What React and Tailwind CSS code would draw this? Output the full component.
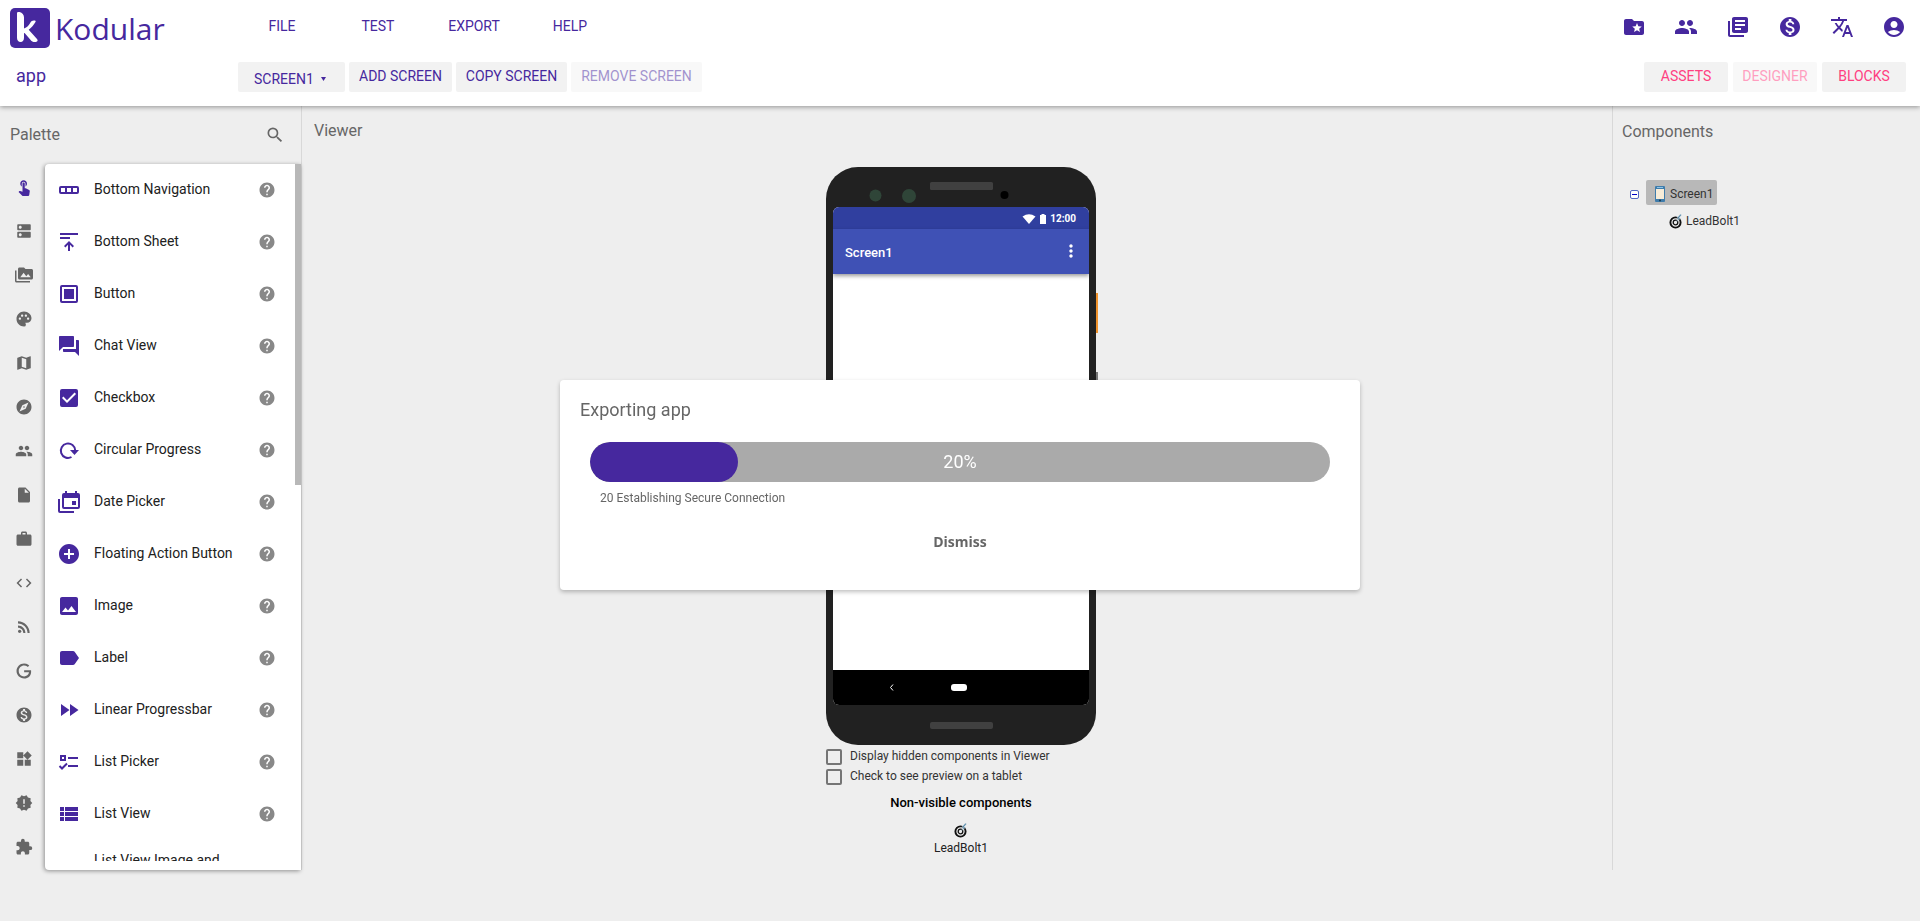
import React from 'react';
import {
  MdAccountCircle,
  MdAddCircle,
  MdCheckBox,
  MdCode,
  MdDns,
  MdExplore,
  MdExtension,
  MdFastForward,
  MdFolderSpecial,
  MdForum,
  MdHelp,
  MdImage,
  MdInsertDriveFile,
  MdLabel,
  MdLibraryBooks,
  MdMap,
  MdMonetizationOn,
  MdMoreVert,
  MdNewReleases,
  MdPalette,
  MdPeople,
  MdPermMedia,
  MdRssFeed,
  MdSearch,
  MdTouchApp,
  MdTranslate,
  MdViewList,
  MdWidgets,
  MdWork,
} from 'react-icons/md';

const Svg = ({ size = 24, children }) => (
  <svg width={size} height={size} viewBox="0 0 24 24" fill="currentColor" aria-hidden="true">
    {children}
  </svg>
);

const BottomNavIcon = () => (
  <Svg>
    <path fillRule="evenodd" d="M4 8h16a2 2 0 0 1 2 2v4a2 2 0 0 1-2 2H4a2 2 0 0 1-2-2v-4a2 2 0 0 1 2-2zm0 2v4h4v-4zm6 0v4h4v-4zm6 0v4h4v-4z" />
  </Svg>
);

const BottomSheetIcon = () => (
  <Svg>
    <path d="M3 3h18v2H3zM3 7h10v2H3zM12 11l5 5-1.4 1.4-2.6-2.6V21h-2v-6.200l-2.600 2.600L7 16z" />
  </Svg>
);

const ButtonIcon = () => (
  <Svg>
    <path fillRule="evenodd" d="M5 3h14a2 2 0 0 1 2 2v14a2 2 0 0 1-2 2H5a2 2 0 0 1-2-2V5a2 2 0 0 1 2-2zm0 2v14h14V5z" />
    <path d="M7 7h10v10H7z" />
  </Svg>
);

const CircularIcon = () => (
  <Svg>
    <path d="M14.500 19A7.200 7.200 0 1 1 18.200 12.500" fill="none" stroke="currentColor" strokeWidth="2" />
    <path d="M13 12h9l-4.500 5z" />
  </Svg>
);

const DatePickerIcon = () => (
  <Svg>
    <path
      fillRule="evenodd"
      d="M8 1h2v2h8V1h2v2h1a2 2 0 0 1 2 2v12a2 2 0 0 1-2 2H7a2 2 0 0 1-2-2V5a2 2 0 0 1 2-2h1zM7 8v9h14V8zM15 11h4v4h-4z"
    />
    <path d="M1 9h2v12h14v2H3a2 2 0 0 1-2-2z" />
  </Svg>
);

const ListPickerIcon = () => (
  <Svg>
    <path fillRule="evenodd" d="M3 5h6v6H3zm2 2v2h2V7z" />
    <path d="M11 7h10v2H11zM11 15h10v2H11z" />
    <path d="M2.500 16l2.500 2.500 5-5" fill="none" stroke="currentColor" strokeWidth="2" />
  </Svg>
);

const GoogleIcon = ({ size }) => (
  <Svg size={size}>
    <path d="M21.350 11.100H12.180V13.830H18.690C18.360 17.640 15.190 19.270 12.190 19.270C8.360 19.270 5 16.250 5 12C5 7.900 8.200 4.730 12.200 4.730C15.290 4.730 17.100 6.700 17.100 6.700L19 4.720C19 4.720 16.560 2 12.100 2C6.420 2 2.030 6.800 2.030 12C2.030 17.050 6.160 22 12.250 22C17.600 22 21.500 18.330 21.500 12.910C21.500 11.760 21.350 11.100 21.350 11.100Z" />
  </Svg>
);

const LeadBoltIcon = () => (
  <svg width="14" height="16" viewBox="0 0 14 16" fill="none" aria-hidden="true">
    <circle cx="6.500" cy="9.500" r="5.100" stroke="#111" strokeWidth="1.900" />
    <circle cx="6.500" cy="9.500" r="2.300" stroke="#111" strokeWidth="1.300" />
    <path d="M11.500 1L7.500 5.500h2L6.500 9.500l5.500-4.500h-2l2.500-3z" fill="#4f86a8" stroke="#eee" strokeWidth="0.400" />
  </svg>
);

const ScreenIcon = () => (
  <svg width="10" height="16" viewBox="0 0 10 16" aria-hidden="true">
    <rect width="10" height="16" rx="1" fill="#3f7cab" />
    <rect x="2" y="1" width="6" height="1" fill="#8cc4ea" />
    <rect x="1" y="3" width="8" height="10" fill="#f7ecd8" />
    <circle cx="5" cy="14.500" r="0.900" fill="#14324a" />
  </svg>
);

const LogoMark = () => (
  <svg width="40" height="40" viewBox="0 0 40 40" aria-hidden="true">
    <rect width="40" height="40" rx="5" fill="#46289e" />
    <path
      d="M7 5.200c0-1.200 1.200-1.600 2.600-1.100 2.700.9 4.400 2.500 4.400 5.200v11.200c3-1.200 5-3.200 6.300-5.800 1-2 2.700-2.600 4.600-2.200.9.200 1 1 .4 1.800-1.700 2.900-3.700 5.400-6.600 7.400l8.300 9.300c1.200 1.400.6 2.700-1.100 2.900-2.400.3-4.200-.5-5.700-2.500L14.600 25l-.6.300v4.500c0 2.600-1.200 4.200-3.400 4.200C8.300 34 7 32.400 7 29.800z"
      fill="#fff"
    />
  </svg>
);

const MENUS = ['FILE', 'TEST', 'EXPORT', 'HELP'];

const TOP_LINKS = [
  { label: 'Projects', icon: MdFolderSpecial },
  { label: 'Community', icon: MdPeople },
  { label: 'Docs', icon: MdLibraryBooks },
  { label: 'Monetization', icon: MdMonetizationOn },
  { label: 'Language', icon: MdTranslate },
  { label: 'Account', icon: MdAccountCircle },
];

const CATEGORIES = [
  { label: 'User Interface', icon: MdTouchApp, active: true },
  { label: 'Layout', icon: MdDns },
  { label: 'Media', icon: MdPermMedia },
  { label: 'Drawing and Animation', icon: MdPalette },
  { label: 'Maps', icon: MdMap },
  { label: 'Sensors', icon: MdExplore },
  { label: 'Social', icon: MdPeople },
  { label: 'Storage', icon: MdInsertDriveFile },
  { label: 'Utilities', icon: MdWork },
  { label: 'Dynamic Components', icon: MdCode },
  { label: 'Connectivity', icon: MdRssFeed },
  { label: 'Google', icon: GoogleIcon },
  { label: 'Monetization', icon: MdMonetizationOn },
  { label: 'Widgets', icon: MdWidgets },
  { label: 'Experimental', icon: MdNewReleases },
  { label: 'Extension', icon: MdExtension },
];

const COMPONENTS = [
  { name: 'Bottom Navigation', icon: BottomNavIcon },
  { name: 'Bottom Sheet', icon: BottomSheetIcon },
  { name: 'Button', icon: ButtonIcon },
  { name: 'Chat View', icon: MdForum },
  { name: 'Checkbox', icon: MdCheckBox },
  { name: 'Circular Progress', icon: CircularIcon },
  { name: 'Date Picker', icon: DatePickerIcon },
  { name: 'Floating Action Button', icon: MdAddCircle },
  { name: 'Image', icon: MdImage },
  { name: 'Label', icon: MdLabel },
  { name: 'Linear Progressbar', icon: MdFastForward },
  { name: 'List Picker', icon: ListPickerIcon },
  { name: 'List View', icon: MdViewList },
];

const ToolButton = ({ children, accent, className = '', ...props }) => (
  <button
    type="button"
    className={`h-[30px] rounded-xs bg-[#f2f2f2] pb-[2px] text-sm disabled:opacity-50 ${accent ? 'text-[#ff4081]' : 'text-[#46289e]'} ${className}`}
    {...props}
  >
    {children}
  </button>
);

const Header = () => (
  <header className="relative z-10 flex h-[106px] flex-col bg-white text-[#46289e] shadow-[0_1px_5px_rgba(0,0,0,0.4)]">
    <div className="flex h-[54px] items-center pt-[2px] pr-[14px] pl-[10px]">
      <a href="#home" className="flex w-56 items-center gap-[5px]">
        <LogoMark />
        <span className="pt-[2px] font-['Open_Sans'] text-[30px] leading-10">Kodular</span>
      </a>
      <nav className="flex flex-1 pb-1">
        {MENUS.map((menu) => (
          <button key={menu} type="button" className="w-24 text-center text-sm">
            {menu}
          </button>
        ))}
      </nav>
      <div className="flex gap-7 pb-[2px]">
        {TOP_LINKS.map(({ label, icon: Icon }) => (
          <a key={label} href={`#${label.toLowerCase()}`} aria-label={label}>
            <Icon size={24} />
          </a>
        ))}
      </div>
    </div>
    <div className="flex items-center gap-1 pt-2 pr-[14px] pl-4">
      <h1 className="w-[218px] pb-[2px] text-lg leading-6">app</h1>
      <div className="relative">
        <select
          aria-label="Screen"
          className="h-[30px] w-[107px] appearance-none rounded-xs bg-[#f2f2f2] pt-[3px] pl-4 text-sm leading-6"
        >
          <option>SCREEN1</option>
        </select>
        <svg width="5" height="4" viewBox="0 0 5 4" className="pointer-events-none absolute top-[15px] right-[19px]" aria-hidden="true">
          <path d="M0 0h5L2.500 4z" fill="currentColor" />
        </svg>
      </div>
      <ToolButton className="w-[103px]">ADD SCREEN</ToolButton>
      <ToolButton className="w-[111px]">COPY SCREEN</ToolButton>
      <ToolButton className="w-[131px]" disabled>REMOVE SCREEN</ToolButton>
      <div className="ml-auto flex gap-[5px]">
        <ToolButton accent className="w-[84px]">ASSETS</ToolButton>
        <ToolButton accent className="w-[84px]" disabled>DESIGNER</ToolButton>
        <ToolButton accent className="w-[84px]">BLOCKS</ToolButton>
      </div>
    </div>
  </header>
);

const Palette = () => (
  <aside className="w-[302px] shrink-0 border-r border-[#d8d8d8]">
    <div className="flex h-[58px] items-center justify-between pr-4 pl-[10px]">
      <h2 className="text-base text-[#666]">Palette</h2>
      <button type="button" aria-label="Search" className="text-[#666]">
        <MdSearch size={20} />
      </button>
    </div>
    <div className="flex">
      <nav className="w-[45px] shrink-0">
        {CATEGORIES.map(({ label, icon: Icon, active }) => (
          <button
            key={label}
            type="button"
            aria-label={label}
            className={`flex h-11 w-full items-center justify-center pt-[2px] pl-[3px] ${active ? 'text-[#46289e]' : 'text-[#666]'}`}
          >
            <Icon size={18} />
          </button>
        ))}
      </nav>
      <div className="relative h-[calc(100vh-215px)] flex-1 rounded-l-sm bg-white pb-[9px] shadow-[-1px_1px_4px_rgba(0,0,0,0.4)]">
        <ul className="h-full overflow-hidden">
          {COMPONENTS.map(({ name, icon: Icon }) => (
            <li key={name} className="flex min-h-13 items-center pr-[25px] pl-3 text-[#46289e]">
              <Icon size={24} />
              <span className="flex-1 pb-[2px] pl-[13px] text-sm text-[#212121]">{name}</span>
              <a href="#help" aria-label={`Help for ${name}`} className="text-[#888]">
                <MdHelp size={18} />
              </a>
            </li>
          ))}
          <li className="py-[10px] pr-16 pl-[49px] text-sm text-[#212121]">List View Image and Text</li>
        </ul>
        <div className="absolute top-0 right-0 h-[321px] w-[6px] bg-[#b8b8b8]" />
      </div>
    </div>
  </aside>
);

const Phone = () => (
  <div className="relative flex h-[578px] w-[270px] flex-col rounded-[32px] bg-[#212121] px-[7px]">
    <div className="relative h-10 shrink-0">
      <svg width="256" height="40" viewBox="0 0 256 40" aria-hidden="true">
        <circle cx="42.500" cy="28.500" r="6" fill="#2f4538" />
        <circle cx="76" cy="29" r="7" fill="#2f4538" />
        <rect x="97" y="15" width="63" height="8" rx="1.500" fill="#404040" />
        <circle cx="171.500" cy="28" r="4" fill="#000" />
      </svg>
    </div>
    <div className="flex flex-1 flex-col overflow-hidden rounded-md bg-white text-white">
      <div className="flex h-[22px] items-center justify-end gap-1 bg-[#303f9f] pt-[2px] pr-[13px]">
        <svg width="14" height="10" viewBox="0 0 14 10" fill="#fff" aria-hidden="true">
          <path d="M0.500 2.500Q7-2 13.500 2.500L7 10z" />
        </svg>
        <svg width="6" height="10" viewBox="0 0 6 10" fill="#fff" aria-hidden="true">
          <path d="M1.500 0h3v1H6v9H0V1h1.500z" />
        </svg>
        <span className="text-[10px] leading-5 font-bold">12:00</span>
      </div>
      <div className="flex h-[45px] items-center justify-between bg-[#3f51b5] pr-2 pb-[2px] pl-3 shadow-[0_2px_4px_rgba(0,0,0,0.4)]">
        <span className="pt-1 text-[13px] font-medium">Screen1</span>
        <MdMoreVert size={20} />
      </div>
      <div className="flex-1" />
      <div className="flex h-[35px] bg-black">
        <svg width="256" height="35" viewBox="0 0 256 35" aria-hidden="true">
          <path d="M60 14.500l-2.500 3 2.500 3" fill="none" stroke="#fff" />
          <rect x="118" y="14" width="16" height="7" rx="3" fill="#fff" />
        </svg>
      </div>
    </div>
    <div className="flex h-10 shrink-0 items-center justify-center">
      <div className="h-[7px] w-[63px] rounded-xs bg-[#404040]" />
    </div>
    {/* side keys */}
    <div className="absolute top-[126px] -right-[2px] h-10 w-[2px] bg-[#f0922b]" />
    <div className="absolute top-[205px] -right-[2px] h-20 w-[2px] bg-[#777]" />
  </div>
);

const ViewerOption = ({ id, children }) => (
  <div className="flex h-5 items-center gap-2">
    <input id={id} type="checkbox" className="size-4 appearance-none rounded-xs border-2 border-[#757575]" />
    <label htmlFor={id} className="pb-[2px] text-xs text-[#333]">{children}</label>
  </div>
);

const Viewer = () => (
  <section className="flex-1 pl-2">
    <h2 className="pt-[13px] pl-1 text-base text-[#666]">Viewer</h2>
    <div className="flex flex-col items-center pt-6">
      <div>
        <Phone />
        <div className="pt-[2px]">
          <ViewerOption id="show-hidden">Display hidden components in Viewer</ViewerOption>
          <ViewerOption id="tablet-preview">Check to see preview on a tablet</ViewerOption>
        </div>
      </div>
      <h3 className="pt-[6px] text-[13px] leading-5 font-medium text-black">Non-visible components</h3>
      <div className="flex flex-col items-center pt-[9px] text-xs text-[#212121]">
        <LeadBoltIcon />
        <span className="leading-5">LeadBolt1</span>
      </div>
    </div>
  </section>
);

const ComponentTree = () => (
  <aside className="w-[308px] shrink-0 border-l border-[#d8d8d8] text-xs text-[#333]">
    <h2 className="pt-[14px] pl-[9px] text-base text-[#666]">Components</h2>
    <ul className="pt-9 pl-[17px]">
      <li>
        <div className="flex h-[25px] items-center gap-[7px]">
          <button type="button" aria-label="Collapse" className="pt-1">
            <svg width="9" height="9" viewBox="0 0 9 9" fill="none" aria-hidden="true">
              <rect x="0.500" y="0.500" width="8" height="8" rx="1.500" fill="#fff" stroke="#5468c0" />
              <path d="M2 4.500h5" stroke="#0000c8" />
            </svg>
          </button>
          <a href="#screen1" className="flex h-[25px] items-center gap-[5px] rounded-xs bg-[#b8b8b8] pt-[2px] pr-1 pl-[9px]">
            <ScreenIcon />
            Screen1
          </a>
        </div>
        <ul className="pt-2 pl-[39px]">
          <li>
            <a href="#leadbolt1" className="flex items-center gap-[3px]">
              <LeadBoltIcon />
              LeadBolt1
            </a>
          </li>
        </ul>
      </li>
    </ul>
  </aside>
);

const ExportDialog = ({ progress, status }) => (
  <div className="fixed inset-0 z-20 flex items-start justify-center pt-[380px]">
    <div role="dialog" aria-labelledby="export-title" className="flex w-[800px] max-w-full flex-col rounded-sm bg-white px-5 pt-4 pb-7 text-[#666] shadow-[0_2px_4px_rgba(0,0,0,0.25)]">
      <h2 id="export-title" className="text-lg">Exporting app</h2>
      <div className="px-[10px] pt-[18px]">
        <div
          role="progressbar"
          aria-valuenow={progress}
          aria-label="Export progress"
          className="relative h-10 overflow-hidden rounded-full bg-[#aaa]"
        >
          <div className="h-full rounded-full bg-[#46289e]" style={{ width: `${progress}%` }} />
          <span className="absolute inset-0 flex items-center justify-center text-lg text-white">{progress}%</span>
        </div>
        <p className="pt-2 pl-[10px] text-xs">{status}</p>
      </div>
      <button type="button" className="mx-auto mt-4 h-10 px-4 font-['Open_Sans'] text-sm font-bold">Dismiss</button>
    </div>
  </div>
);

const App = () => (
  <div className="min-h-screen bg-[#eee] font-[Roboto,sans-serif]">
    <Header />
    <main className="flex">
      <Palette />
      <Viewer />
      <ComponentTree />
    </main>
    <ExportDialog progress={20} status="20 Establishing Secure Connection" />
  </div>
);

export default App;
